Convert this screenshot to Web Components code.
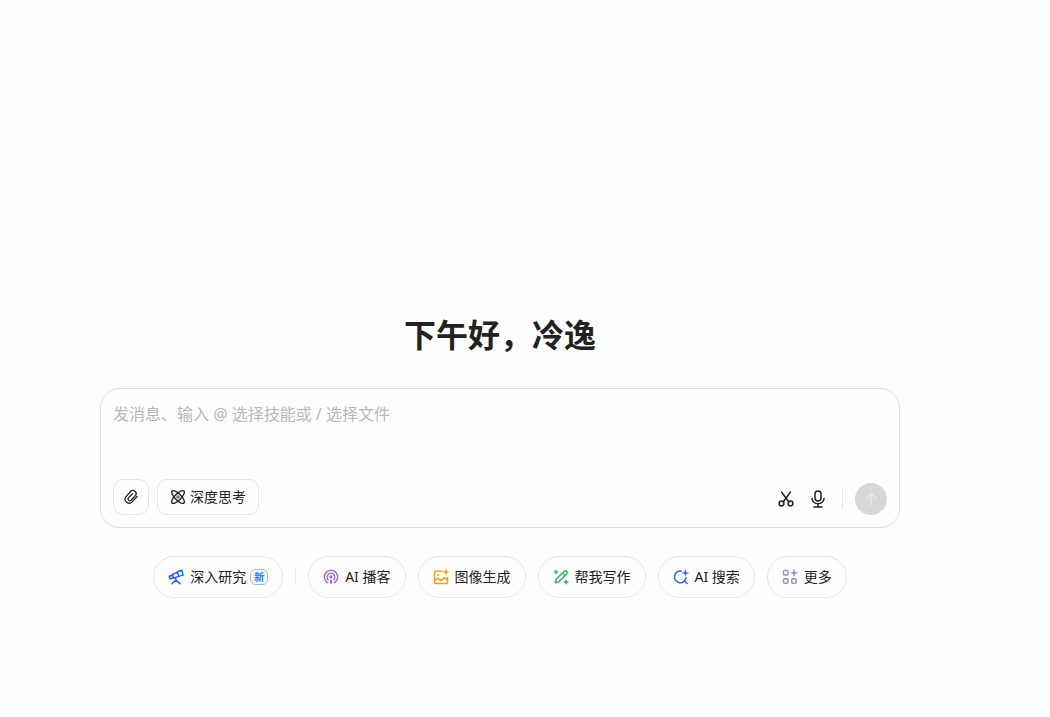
<!DOCTYPE html>
<html lang="zh-CN">
<head>
<meta charset="utf-8">
<meta name="viewport" content="width=device-width, initial-scale=1">
<title>对话</title>
<style>
  body {
    margin: 0;
    background: #fefefe;
    color: #222;
    font-family: "Noto Sans", "Noto Sans CJK SC", sans-serif;
    font-size: 14px;
    line-height: 20px;
    --line: #e6e6e8;
  }
</style>
</head>
<body>
<chat-home></chat-home>

<script>
const icons = {
  clip: '<path d="M14.200 7.500 9 12.900a4 4 0 0 1-6.200-5L7.800 2.300a3.200 3.200 0 0 1 4.900 4L8 11.200a1.800 1.800 0 0 1-2.700-2.300L9.600 4.700" stroke-width="1.300"/>',
  atom: '<g stroke-width="1.400"><ellipse cx="8" cy="8" rx="8.500" ry="3.100" transform="rotate(45 8 8)"/><ellipse cx="8" cy="8" rx="8.500" ry="3.100" transform="rotate(-45 8 8)"/></g><circle cx="8" cy="8" r="1.800" fill="currentColor" stroke="none" opacity=".6"/>',
  cut: '<path d="M3.500 1 10.900 11M12.500 1 5.100 11"/><circle cx="3.500" cy="12.500" r="2.400"/><circle cx="12.500" cy="12.500" r="2.400"/>',
  mic: '<rect x="5" y="0" width="6" height="10" rx="3"/><path d="M2 7.500a6 5.300 0 0 0 12 0M8 12.800V16M4 16h8"/>',
  up: '<path d="M8 14V2.500M3 7.500l5-5 5 5"/>',
  scope: '<path d="m9.400 2.700 4.300-1.500 1.400 4.900-4.400 1.300zM9.400 3.500 4.400 5.400l1.300 3.700 5-1.700M4.600 6 1.200 7.300l.8 2.400 3.400-1M7.800 9v2.200L4 14.700M7.800 11.200l4.200 3.500"/>',
  podcast: '<path d="M4.700 13.800a6.700 6.700 0 1 1 6.600 0M5.100 10.800a3.900 3.900 0 1 1 5.800 0"/><circle cx="8" cy="7.900" r="0.800" fill="currentColor"/><path d="M8 11.800v2" stroke-width="2.200"/>',
  image: '<path d="M9 2.200H2.800A1.300 1.300 0 0 0 1.500 3.500v9.700a1.300 1.300 0 0 0 1.300 1.300h10.400a1.300 1.300 0 0 0 1.300-1.300V8.200M1.700 11.600l3.300-2.300 3 2.300 3.200-2.900 3.100 2.400M4.700 6h1"/><path d="M13 0c.3 2.200.9 2.800 3 3.100-2.100.4-2.700 1-3 3.100-.4-2.100-1-2.700-3.100-3.100C12 2.800 12.600 2.200 13 0z" fill="currentColor" stroke-width=".4"/>',
  write: '<path d="m2.400 13.700.7-3.400 8.200-8a1.600 1.600 0 0 1 2.200 0l.3.300a1.600 1.600 0 0 1 0 2.200l-8.100 8.200zM9.700 4l2.500 2.500M3 1.500v3M1.500 3h3M13 11.300v3.400M11.300 13h3.400"/>',
  search: '<path d="M8.200 2.200A5.800 5.800 0 1 0 13 8.700M11.400 12l2.800 2.500"/><path d="M12.400.5c.3 2.500 1 3.200 3.400 3.500-2.400.4-3.100 1-3.400 3.500-.4-2.500-1-3.100-3.500-3.500 2.500-.3 3.100-1 3.500-3.500z" fill="currentColor" stroke-width=".3"/>',
  more: '<rect x="1.500" y="1.500" width="4.500" height="4.500" rx="1"/><rect x="1.500" y="9.700" width="4.500" height="4.500" rx="1"/><rect x="9.700" y="9.700" width="4.500" height="4.500" rx="1"/><path d="M12 .4c.3 2.500 1 3.200 3.500 3.500-2.500.4-3.200 1-3.500 3.500-.4-2.500-1-3.100-3.500-3.500 2.500-.3 3.100-1 3.500-3.500z" fill="currentColor" stroke-width=".6"/>'
};

const define = (name, html, setup) => customElements.define(name, class extends HTMLElement {
  connectedCallback() {
    if (this.shadowRoot) return;
    const template = document.createElement('template');
    template.innerHTML = html;
    this.attachShadow({ mode: 'open' }).append(template.content.cloneNode(true));
    if (setup) setup(this, this.shadowRoot);
  }
});

define('line-icon', `
  <style>
    :host { display: block; width: 16px; height: 16px; flex: none; }
    svg { display: block; width: 100%; height: 100%; overflow: visible; fill: none;
      stroke: currentColor; stroke-width: 1.500; stroke-linecap: round; stroke-linejoin: round; }
  </style>
  <svg viewBox="0 0 16 16" aria-hidden="true"></svg>`,
  (host, root) => { root.querySelector('svg').innerHTML = icons[host.getAttribute('name')]; });

define('v-rule', `
  <style>:host { display: block; width: 1px; background: var(--line); flex: none; }</style>`);

define('skill-chip', `
  <style>
    :host { display: block; }
    button { display: flex; align-items: center; gap: 6px; height: 42px; padding: 0 14px;
      border: 1px solid var(--line); border-radius: 21px; background: transparent;
      font: inherit; color: inherit; white-space: nowrap; cursor: pointer; }
    line-icon { color: var(--tint); }
    .label { display: flex; align-items: center; gap: 4px; }
  </style>
  <button type="button"><line-icon></line-icon><span class="label"><slot></slot></span></button>`,
  (host, root) => {
    const old = root.querySelector('line-icon');
    const icon = document.createElement('line-icon');
    icon.setAttribute('name', host.getAttribute('icon'));
    old.replaceWith(icon);
  });

define('new-badge', `
  <style>
    :host { display: block; box-sizing: border-box; width: 18px; height: 16px; border: 1px solid #9dbffb;
      border-radius: 5px; background: #f3f8ff; color: #2b7cff; font-size: 10px; font-weight: 700;
      line-height: 14px; text-align: center; }
  </style><slot></slot>`);

define('message-box', `
  <style>
    :host { display: block; }
    form { display: flex; flex-direction: column; box-sizing: border-box; min-height: 140px;
      padding: 12px; border: 1px solid #e0e0e2; border-radius: 20px; }
    textarea { flex: 1; padding: 0; margin: 0; border: 0; outline: 0; resize: none; background: transparent;
      font: inherit; font-size: 16px; line-height: 26px; color: inherit; }
    textarea::placeholder { color: #b8b8ba; opacity: 1; }
    .bar { display: flex; align-items: flex-end; justify-content: space-between; }
    .group { display: flex; align-items: center; gap: 8px; }
    button { display: flex; align-items: center; justify-content: center; box-sizing: border-box;
      padding: 0; border: 0; background: transparent; font: inherit; color: inherit; cursor: pointer; }
    .tool { height: 36px; min-width: 36px; border: 1px solid var(--line); border-radius: 10px; gap: 4px; }
    .wide { padding: 0 12px; }
    .plain { width: 24px; height: 32px; }
    .group v-rule { height: 20px; margin: 0 4px; }
    .send { width: 32px; height: 32px; border-radius: 50%; background: #d7d7d7; color: #e8e8e8; }
  </style>
  <form>
    <textarea rows="1" aria-label="发消息" placeholder="发消息、输入 @ 选择技能或 / 选择文件"></textarea>
    <div class="bar">
      <div class="group">
        <button class="tool" type="button" aria-label="添加附件"><line-icon name="clip"></line-icon></button>
        <button class="tool wide" type="button"><line-icon name="atom"></line-icon><span>深度思考</span></button>
      </div>
      <div class="group">
        <button class="plain" type="button" aria-label="截图"><line-icon name="cut"></line-icon></button>
        <button class="plain" type="button" aria-label="语音输入"><line-icon name="mic"></line-icon></button>
        <v-rule></v-rule>
        <button class="send" type="submit" aria-label="发送" disabled><line-icon name="up"></line-icon></button>
      </div>
    </div>
  </form>`);

define('chat-home', `
  <style>
    :host { display: block; box-sizing: border-box; min-height: 100vh; padding: 311px 100px 48px 50px; }
    main { max-width: 800px; margin: 0 auto; }
    h1 { margin: 0 0 29px; font-size: 32px; line-height: 48px; font-weight: 700; text-align: center; }
    nav { display: flex; flex-wrap: wrap; align-items: center; justify-content: center; gap: 12px; margin-top: 28px; }
    v-rule { height: 16px; }
  </style>
  <main>
    <h1>下午好，冷逸</h1>
    <message-box></message-box>
    <nav aria-label="技能">
      <skill-chip icon="scope" style="--tint:#1664f5">深入研究<new-badge>新</new-badge></skill-chip>
      <v-rule></v-rule>
      <skill-chip icon="podcast" style="--tint:#a565e0">AI 播客</skill-chip>
      <skill-chip icon="image" style="--tint:#ff9c13">图像生成</skill-chip>
      <skill-chip icon="write" style="--tint:#2fb958">帮我写作</skill-chip>
      <skill-chip icon="search" style="--tint:#2468e8">AI 搜索</skill-chip>
      <skill-chip icon="more" style="--tint:#9297b8">更多</skill-chip>
    </nav>
  </main>`);
</script>
</body>
</html>
